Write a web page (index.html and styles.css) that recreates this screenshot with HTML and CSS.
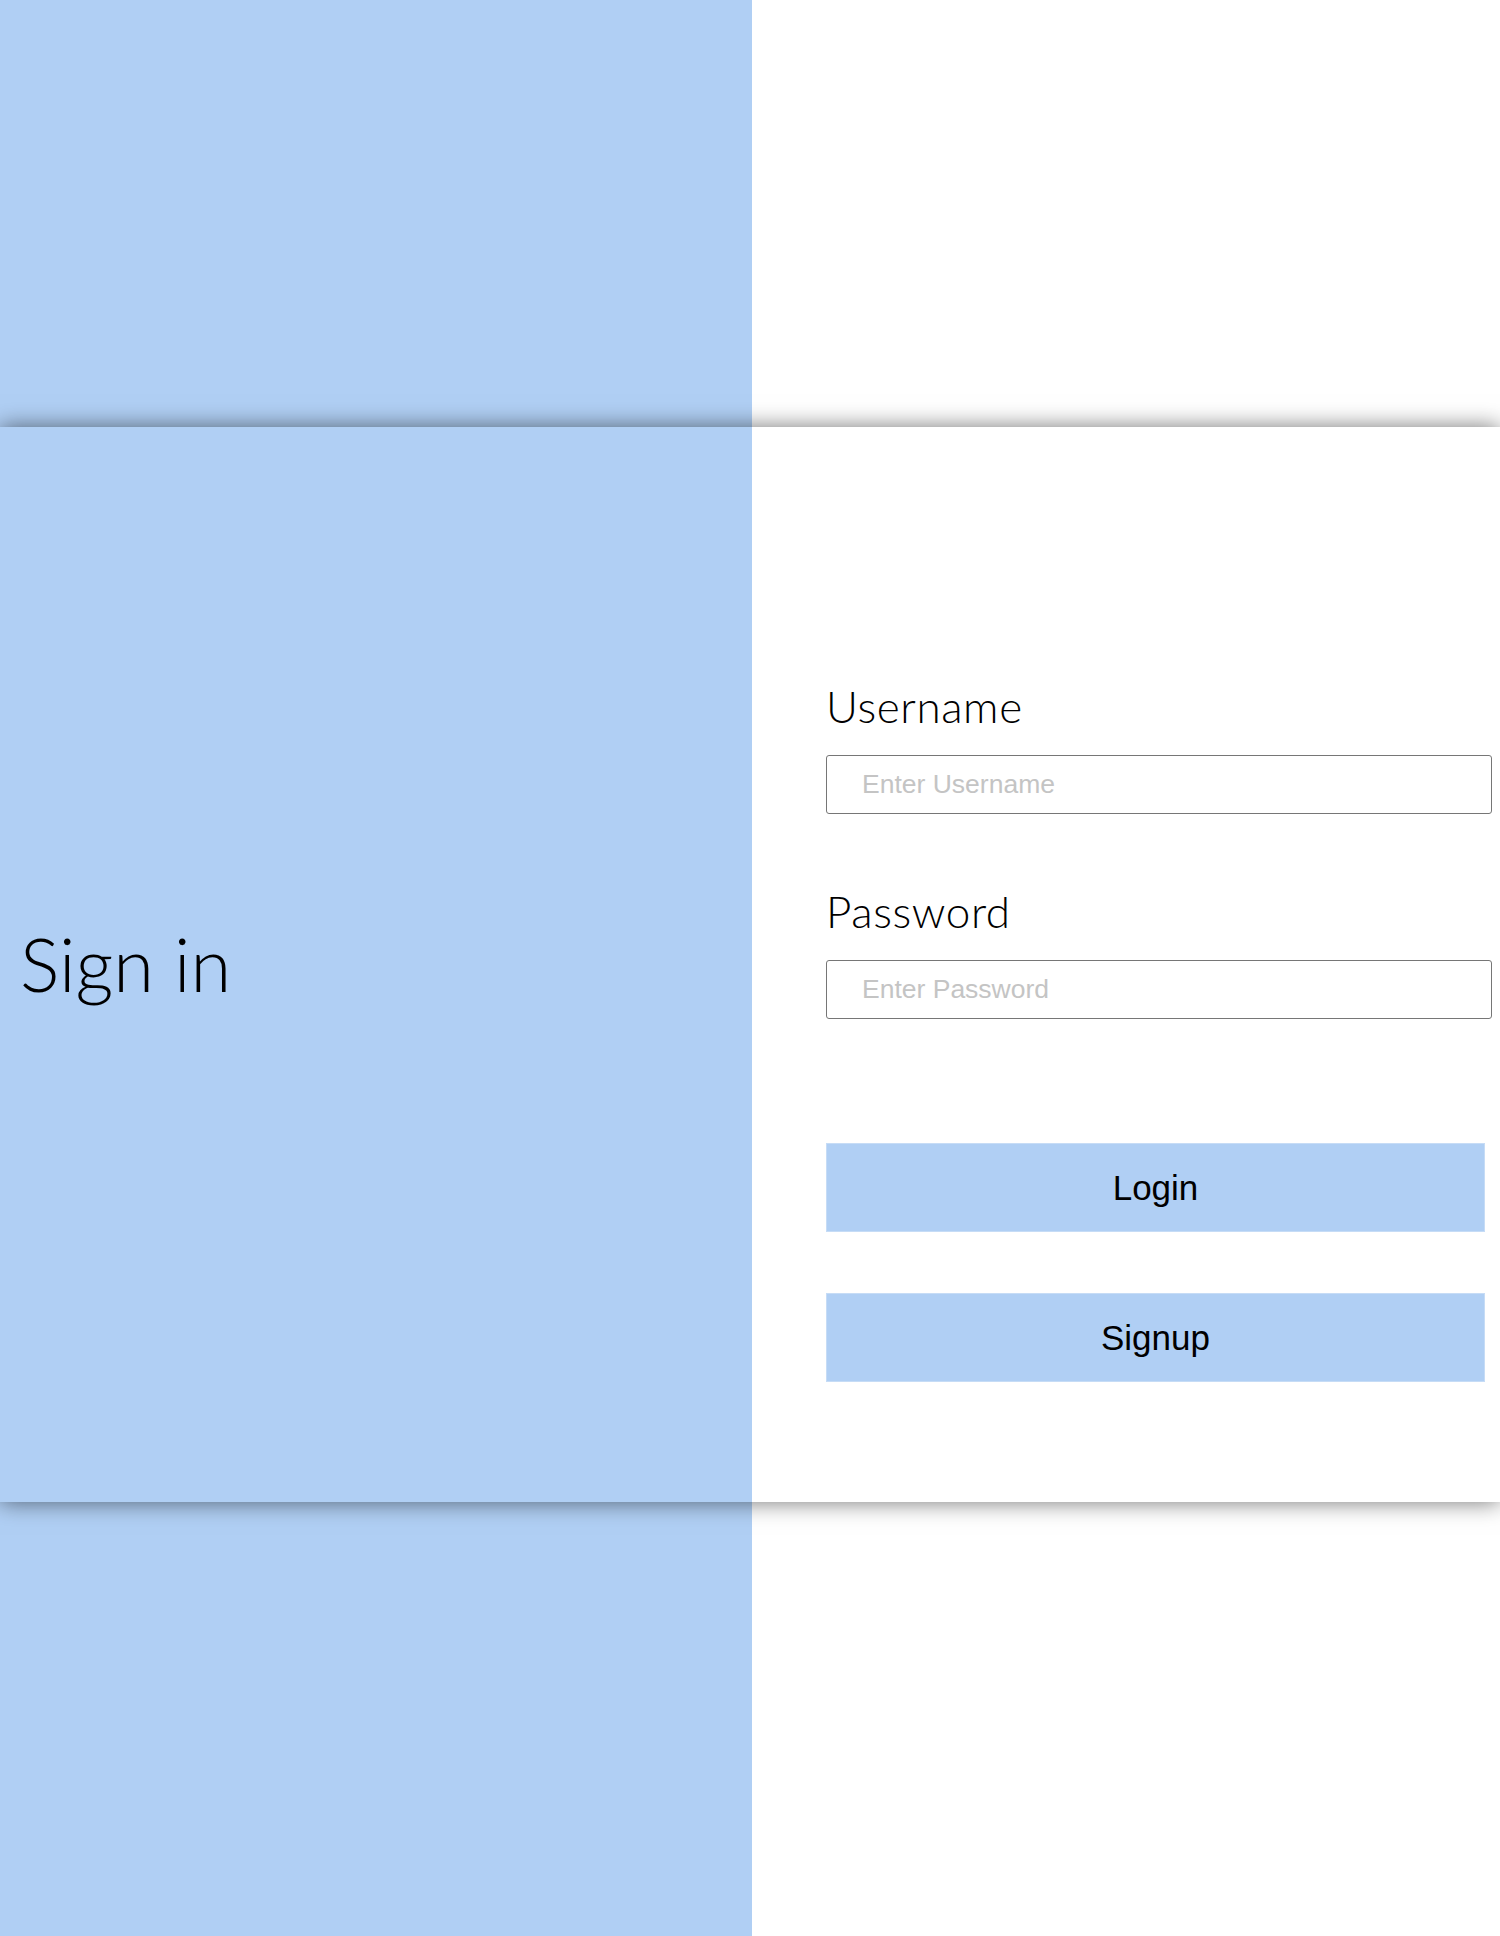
FILE: index.html
```html
<!DOCTYPE html>
<html lang="en">
<head>
<meta charset="utf-8">
<title>Sign in</title>
<link rel="stylesheet" href="styles.css">
</head>
<body>
<div class="page">
  <div class="band band-top">
    <div class="col-left"></div>
    <div class="col-right"></div>
  </div>
  <div class="band band-main">
    <div class="col-left title-col">
      <h1 class="title">Sign in</h1>
    </div>
    <div class="col-right form-col">
      <form class="form">
        <label class="field-label" for="username">Username</label>
        <input class="field-input" id="username" type="text" placeholder="Enter Username">
        <label class="field-label label-gap" for="password">Password</label>
        <input class="field-input" id="password" type="password" placeholder="Enter Password">
        <button class="btn btn-login" type="button">Login</button>
        <button class="btn btn-signup" type="button">Signup</button>
      </form>
    </div>
  </div>
  <div class="band band-bottom">
    <div class="col-left"></div>
    <div class="col-right"></div>
  </div>
</div>
</body>
</html>
```
FILE: styles.css
```css
* { box-sizing: border-box; }
html, body { margin: 0; padding: 0; }
body {
  width: 1500px;
  height: 1936px;
  overflow: hidden;
  background: #ffffff;
  font-family: "Lato", "Liberation Sans", sans-serif;
}
.page {
  display: grid;
  grid-template-rows: 427px 1075px 434px;
  height: 1936px;
}
.band {
  display: grid;
  grid-template-columns: 752px 1fr;
}
.col-left { background: #b0cff4; }
.col-right { background: #ffffff; }
.band-main {
  position: relative;
  z-index: 1;
  box-shadow: 0 0 22px rgba(0, 0, 0, 0.55);
}
.title-col {
  display: flex;
  align-items: center;
  padding-left: 20px;
}
.title {
  margin: 0;
  font-family: "Lato", sans-serif;
  font-weight: 300;
  font-size: 74px;
  line-height: 1.2;
  color: #000;
}
.form-col {
  padding-left: 74px;
  padding-top: 255px;
}
.form {
  display: flex;
  flex-direction: column;
  align-items: flex-start;
  margin: 0;
}
.field-label {
  font-family: "Lato", sans-serif;
  font-weight: 300;
  font-size: 44px;
  line-height: 48px;
  color: #000;
  letter-spacing: 0.6px;
  margin-bottom: 25px;
}
.label-gap { margin-top: 73px; }
.field-input {
  width: 666px;
  height: 59px;
  margin: 0;
  border: 1px solid #767676;
  border-radius: 3px;
  padding: 0 0 0 35px;
  font-family: "Liberation Sans", Arial, sans-serif;
  font-size: 26.5px;
  color: #000;
  background: #fff;
  outline: none;
}
.field-input::placeholder { color: #c4c4c4; }
.btn {
  width: 659px;
  height: 89px;
  margin: 0;
  border: 1px solid #c6dcf6;
  background: #b0cff4;
  font-family: "Liberation Sans", Arial, sans-serif;
  font-size: 35px;
  color: #000;
  padding: 0;
  cursor: pointer;
}
.btn-login { margin-top: 124px; }
.btn-signup { margin-top: 61px; }
```
